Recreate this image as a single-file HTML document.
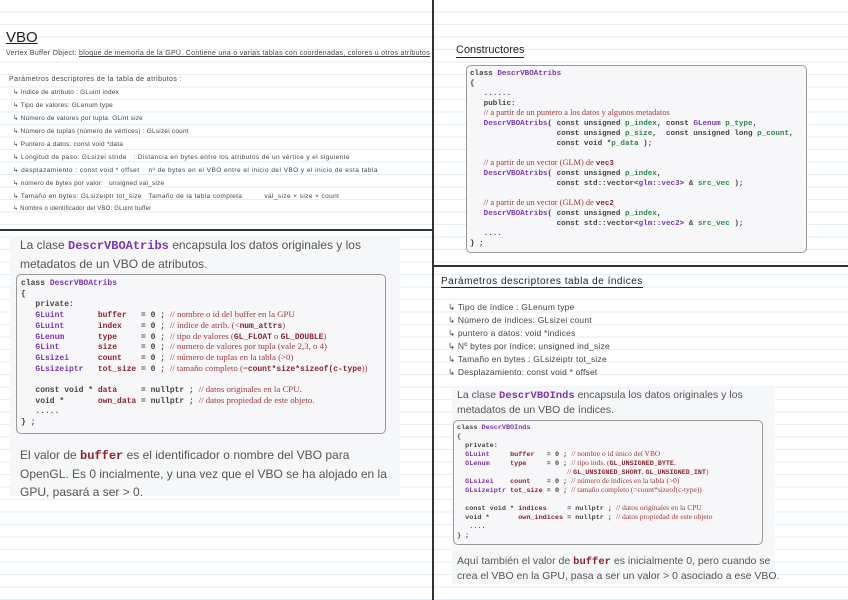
<!DOCTYPE html>
<html><head><meta charset="utf-8"><style>
*{margin:0;padding:0;box-sizing:border-box}
body{width:848px;height:600px;overflow:hidden;position:relative;background:#fff;
background-image:repeating-linear-gradient(to bottom,transparent 0,transparent 11.5px,#e4eef5 11.5px,#e4eef5 12.5px);
font-family:"Liberation Sans",sans-serif;color:#333}
.a{position:absolute;white-space:nowrap}
pre.a{white-space:pre}
.hw{font-size:6.5px;color:#444;letter-spacing:.2px}
.panel{position:absolute;background:#f6f7f8}
.box{position:absolute;border:1.3px solid #999;border-radius:5px;background:#f7f7f9}
pre{font-family:"Liberation Mono",monospace;font-weight:bold;color:#444}
.p{color:#7a35b8}.r{color:#8a2230}.c{color:#a33a3a;font-family:"Liberation Serif",serif;font-weight:normal;font-size:1.1em;line-height:0}
.c b{font-size:.9em;line-height:0}
.g{color:#2a8a4a}
.fs{font-family:"Liberation Sans",sans-serif;color:#666}
</style></head><body>
<div class="a" style="left:0;top:229px;width:433px;height:2px;background:#333"></div>
<div class="a" style="left:432px;top:0;width:2px;height:600px;background:#333"></div>
<div class="a" style="left:433px;top:265px;width:415px;height:2px;background:#333"></div>

<div class="a" style="left:6px;top:29px;font-size:15px;color:#222;text-decoration:underline">VBO</div>
<div class="a hw" style="left:6px;top:50px;font-size:7px;letter-spacing:.3px">Vertex Buffer Object: <u>bloque de memoria de la GPU. Contiene una o varias tablas con coordenadas, colores u otros atributos</u></div>
<div class="a hw" style="left:9px;top:76px;font-size:7px;letter-spacing:.4px">Parámetros descriptores de la tabla de atributos :</div>
<div class="a hw" style="left:13px;top:88px">↳ índice de atributo : GLuint index</div>
<div class="a hw" style="left:13px;top:101px">↳ Tipo de valores: GLenum type</div>
<div class="a hw" style="left:13px;top:114px">↳ Número de valores por tupla: GLint size</div>
<div class="a hw" style="left:13px;top:127px">↳ Número de tuplas (número de vértices) : GLsizei count</div>
<div class="a hw" style="left:13px;top:140px">↳ Puntero a datos: const void *data</div>
<div class="a hw" style="left:13px;top:153px;letter-spacing:.4px">↳ Longitud de paso: GLsizei stride &nbsp; : Distancia en bytes entre los atributos de un vértice y el siguiente</div>
<div class="a hw" style="left:13px;top:166px;letter-spacing:.45px">↳ desplazamiento : const void * offset &nbsp;&nbsp; nº de bytes en el VBO entre el inicio del VBO y el inicio de esta tabla</div>
<div class="a hw" style="left:13px;top:179px">↳ número de bytes por valor: &nbsp; unsigned val_size</div>
<div class="a hw" style="left:13px;top:192px;letter-spacing:.4px">↳ Tamaño en bytes: GLsizeiptr tot_size &nbsp; Tamaño de la tabla completa &nbsp;&nbsp;&nbsp;&nbsp;&nbsp;&nbsp;&nbsp;&nbsp; val_size × size × count</div>
<div class="a hw" style="left:13px;top:205px;font-size:6px">↳ Nombre o identificador del VBO: GLuint buffer</div>

<div class="panel" style="left:10px;top:236px;width:390px;height:260px"></div>
<div class="a fs" style="left:20px;top:236px;font-size:12px;line-height:18px;color:#555">La clase <b class="p" style="font-family:'Liberation Mono',monospace">DescrVBOAtribs</b> encapsula los datos originales y los<br>metadatos de un VBO de atributos.</div>
<div class="box" style="left:16px;top:274px;width:370px;height:160px"></div>
<pre class="a" style="left:21px;top:279px;font-size:8px;line-height:10.7px">class <span class="p">DescrVBOAtribs</span>
{
   private:
   <span class="p">GLuint</span>       <span class="r">buffer</span>   = 0 ; <span class="c">// nombre o id del buffer en la GPU</span>
   <span class="p">GLuint</span>       <span class="r">index</span>    = 0 ; <span class="c">// índice de atrib. (&lt;<b class="r" style="font-family:'Liberation Mono'">num_attrs</b>)</span>
   <span class="p">GLenum</span>       <span class="r">type</span>     = 0 ; <span class="c">// tipo de valores (<b class="r" style="font-family:'Liberation Mono'">GL_FLOAT</b> o <b class="r" style="font-family:'Liberation Mono'">GL_DOUBLE</b>)</span>
   <span class="p">GLint</span>        <span class="r">size</span>     = 0 ; <span class="c">// numero de valores por tupla (vale 2,3, o 4)</span>
   <span class="p">GLsizei</span>      <span class="r">count</span>    = 0 ; <span class="c">// número de tuplas en la tabla (&gt;0)</span>
   <span class="p">GLsizeiptr</span>   <span class="r">tot_size</span> = 0 ; <span class="c">// tamaño completo (=<b class="r" style="font-family:'Liberation Mono'">count*size*sizeof(c-type</b>))</span>

   const void * <span class="r">data</span>     = nullptr ; <span class="c">// datos originales en la CPU.</span>
   void *       <span class="r">own_data</span> = nullptr ; <span class="c">// datos propiedad de este objeto.</span>
   .....
} ;</pre>
<div class="a fs" style="left:20px;top:446px;font-size:12px;line-height:18px;color:#555">El valor de <b class="r" style="font-family:'Liberation Mono',monospace">buffer</b> es el identificador o nombre del VBO para<br>OpenGL. Es 0 incialmente, y una vez que el VBO se ha alojado en la<br>GPU, pasará a ser &gt; 0.</div>

<div class="a" style="left:456px;top:44px;font-size:11px;color:#222;border-bottom:1.3px solid #222;padding-bottom:1px">Constructores</div>
<div class="box" style="left:466px;top:65px;width:341px;height:188px"></div>
<pre class="a" style="left:470px;top:69px;font-size:7.6px;line-height:10px">class <span class="p">DescrVBOAtribs</span>
{
   ......
   public:
   <span class="c">// a partir de un puntero a los datos y algunos metadatos</span>
   <span class="p">DescrVBOAtribs</span>( const unsigned <span class="g">p_index</span>, const <span class="p">GLenum</span> <span class="g">p_type</span>,
                   const unsigned <span class="g">p_size</span>,  const unsigned long <span class="g">p_count</span>,
                   const void *<span class="g">p_data</span> );

   <span class="c">// a partir de un vector (GLM) de <b class="r" style="font-family:'Liberation Mono'">vec3</b></span>
   <span class="p">DescrVBOAtribs</span>( const unsigned <span class="g">p_index</span>,
                   const std::vector&lt;<span class="p">glm</span>::<span class="p">vec3</span>&gt; &amp; <span class="g">src_vec</span> );

   <span class="c">// a partir de un vector (GLM) de <b class="r" style="font-family:'Liberation Mono'">vec2</b></span>
   <span class="p">DescrVBOAtribs</span>( const unsigned <span class="g">p_index</span>,
                   const std::vector&lt;<span class="p">glm</span>::<span class="p">vec2</span>&gt; &amp; <span class="g">src_vec</span> );
   ....
} ;</pre>

<div class="a" style="left:441px;top:276px;font-size:10px;color:#222;border-bottom:1.2px solid #222;letter-spacing:.5px">Parámetros descriptores tabla de índices</div>
<div class="a hw" style="left:448px;top:302px;font-size:8.5px">↳ Tipo de índice : GLenum type</div>
<div class="a hw" style="left:448px;top:315px;font-size:8.5px">↳ Número de índices: GLsizei count</div>
<div class="a hw" style="left:448px;top:328px;font-size:8.5px">↳ puntero a datos: void *indices</div>
<div class="a hw" style="left:448px;top:341px;font-size:8.5px">↳ Nº bytes por índice: unsigned ind_size</div>
<div class="a hw" style="left:448px;top:354px;font-size:8.5px">↳ Tamaño en bytes : GLsizeiptr tot_size</div>
<div class="a hw" style="left:448px;top:367px;font-size:8.5px">↳ Desplazamiento: const void * offset</div>
<div class="panel" style="left:452px;top:388px;width:323px;height:196px"></div>
<div class="a fs" style="left:457px;top:388px;font-size:10.5px;line-height:14px;color:#555">La clase <b class="p" style="font-family:'Liberation Mono',monospace">DescrVBOInds</b> encapsula los datos originales y los<br>metadatos de un VBO de índices.</div>
<div class="box" style="left:453px;top:420px;width:310px;height:125px"></div>
<pre class="a" style="left:457px;top:424px;font-size:6.8px;line-height:9px">class <span class="p">DescrVBOInds</span>
{
  private:
  <span class="p">GLuint</span>     <span class="r">buffer</span>   = 0 ; <span class="c">// nombre o id único del VBO</span>
  <span class="p">GLenum</span>     <span class="r">type</span>     = 0 ; <span class="c">// tipo inds. (<b class="r" style="font-family:'Liberation Mono'">GL_UNSIGNED_BYTE</b>,</span>
                           <span class="c">// <b class="r" style="font-family:'Liberation Mono'">GL_UNSIGNED_SHORT</b>, <b class="r" style="font-family:'Liberation Mono'">GL_UNSIGNED_INT</b>)</span>
  <span class="p">GLsizei</span>    <span class="r">count</span>    = 0 ; <span class="c">// número de índices en la tabla (&gt;0)</span>
  <span class="p">GLsizeiptr</span> <span class="r">tot_size</span> = 0 ; <span class="c">// tamaño completo (=count*sizeof(c-type))</span>

  const void * <span class="r">indices</span>     = nullptr ; <span class="c">// datos originales en la CPU</span>
  void *       <span class="r">own_indices</span> = nullptr ; <span class="c">// datos propiedad de este objeto</span>
   ....
} ;</pre>
<div class="a fs" style="left:457px;top:554px;font-size:10.5px;line-height:14px;color:#555">Aquí también el valor de <b class="r" style="font-family:'Liberation Mono',monospace">buffer</b> es inicialmente 0, pero cuando se<br>crea el VBO en la GPU, pasa a ser un valor &gt; 0 asociado a ese VBO.</div>
</body></html>
